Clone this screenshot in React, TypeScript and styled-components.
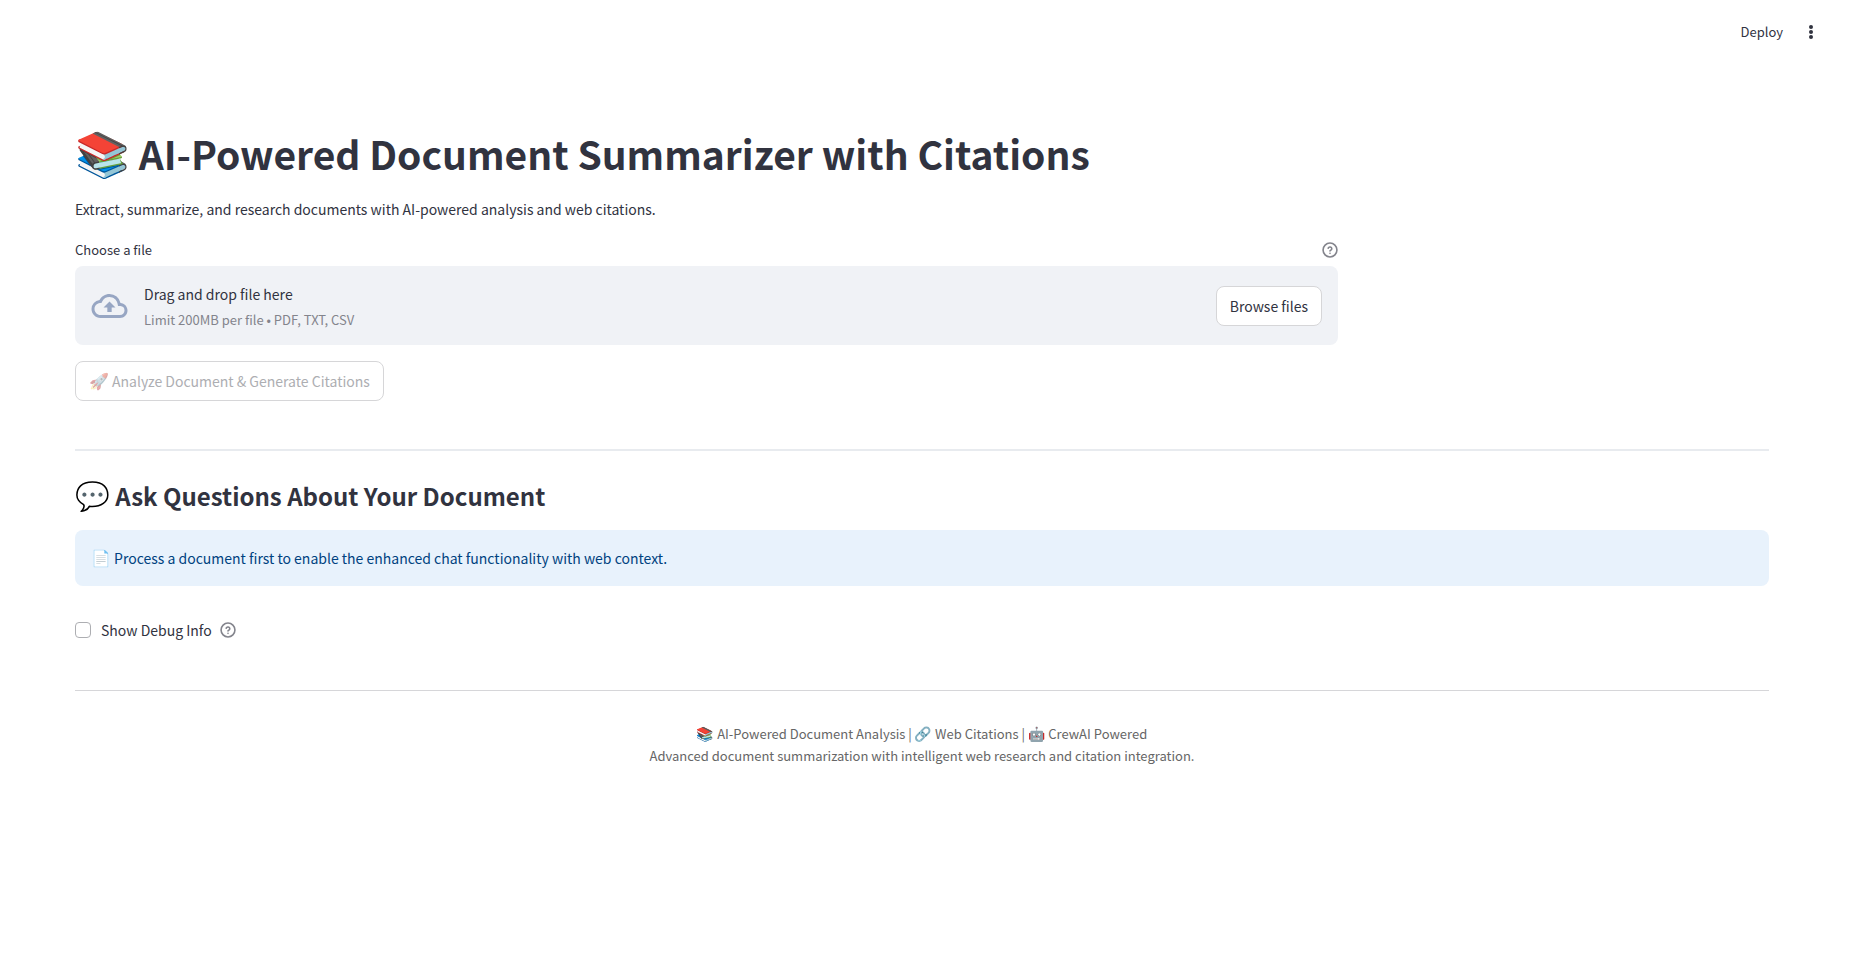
import React from "react";
import styled, { createGlobalStyle } from "styled-components";

const GlobalStyle = createGlobalStyle`
  *, *::before, *::after { box-sizing: border-box; }
  body {
    margin: 0;
    background: #ffffff;
    color: #31333f;
    font-family: "Source Sans Pro", "Noto Sans CJK JP", "Noto Sans", sans-serif;
    font-size: 14px;
    line-height: 24px;
  }
  button, input { font: inherit; color: inherit; }
  h1, h2, p { margin: 0; }
`;

const Header = styled.header`
  display: flex;
  justify-content: flex-end;
  align-items: center;
  gap: 18px;
  height: 64px;
  padding: 0 28px;
`;

const PlainButton = styled.button`
  display: flex;
  align-items: center;
  padding: 0;
  border: 0;
  background: transparent;
  font-size: 13px;
  line-height: 20px;
  cursor: pointer;
`;

const Main = styled.main`
  padding: 55px 80px 80px 75px;
`;

const Emoji = styled.span<{ $size: number }>`
  font-family: "Noto Color Emoji", sans-serif;
  font-size: ${(p) => p.$size}px;
  line-height: 1;
`;

const Title = styled.h1`
  font-size: 39px;
  font-weight: 700;
  line-height: 52px;
  padding: 8px 0 18px;
`;

const Upload = styled.section`
  display: grid;
  grid-template-columns: 3fr 1fr;
  gap: 10px;
  margin-top: 19px;
`;

const LabelRow = styled.div`
  display: flex;
  justify-content: space-between;
  align-items: center;
  margin-bottom: 6px;
  font-size: 13px;
  line-height: 20px;
`;

const Dropzone = styled.div`
  display: flex;
  align-items: center;
  gap: 16px;
  padding: 15px 16px;
  min-height: 79px;
  border-radius: 8px;
  background: #f0f2f6;
`;

const DropText = styled.div`
  flex: 1;
`;

const Limit = styled.div`
  margin-top: 4px;
  font-size: 13px;
  line-height: 20px;
  color: #83848c;
`;

const Button = styled.button`
  height: 40px;
  padding: 0 13px;
  border: 1px solid #d6d6d8;
  border-radius: 8px;
  background: #ffffff;
  cursor: pointer;
  &:disabled {
    color: #adaeb2;
    cursor: not-allowed;
  }
  &:disabled span { opacity: 0.4; }
`;

const Actions = styled.div`
  margin-top: 16px;
`;

const Divider = styled.hr<{ $strong?: boolean }>`
  margin: ${(p) => (p.$strong ? "48px 0 26px" : "48px 0 32px")};
  border: 0;
  height: ${(p) => (p.$strong ? 2 : 1)}px;
  background: ${(p) => (p.$strong ? "#e8ebef" : "#d6d6d9")};
`;

const Subtitle = styled.h2`
  font-size: 24px;
  font-weight: 700;
  line-height: 38px;
`;

const Notice = styled.div`
  margin-top: 15px;
  padding: 16px;
  border-radius: 8px;
  background: #e8f2fc;
  color: #004280;
`;

const DebugRow = styled.div`
  display: flex;
  align-items: center;
  gap: 8px;
  margin-top: 32px;
`;

const CheckLabel = styled.label`
  display: flex;
  align-items: center;
  gap: 10px;
`;

const Checkbox = styled.input`
  appearance: none;
  width: 16px;
  height: 16px;
  margin: 0;
  border: 1px solid #adaeb2;
  border-radius: 4px;
  background: #ffffff;
  &:checked { background: #ff4b4b; }
`;

const Footer = styled.footer`
  text-align: center;
  font-size: 13px;
  line-height: 22px;
  color: #666666;
`;

const Svg = styled.svg`
  display: block;
  flex: none;
`;

const HelpIcon = () => (
  <Svg width="16" height="16" viewBox="0 0 24 24" fill="none" stroke="#83848c" strokeWidth="2.4" strokeLinecap="round" strokeLinejoin="round" role="img" aria-label="Help">
    <circle cx="12" cy="12" r="10.4" />
    <path d="M9.3 9.2a2.8 2.8 0 0 1 5.4 1c0 1.8-2.7 2.6-2.7 3.2" />
    <path d="M12 17h.01" />
  </Svg>
);

const CloudIcon = () => (
  <Svg width="37" height="36" viewBox="0 0 24 24" fill="#97a6c3" aria-hidden="true">
    <path d="M19.35 10.04A7.49 7.49 0 0 0 12 4C9.11 4 6.6 5.64 5.35 8.04A5.994 5.994 0 0 0 0 14c0 3.31 2.69 6 6 6h13c2.76 0 5-2.24 5-5 0-2.64-2.05-4.78-4.65-4.96zM19 18H6c-2.21 0-4-1.79-4-4 0-2.05 1.53-3.76 3.56-3.97l1.07-.11.5-.95A5.469 5.469 0 0 1 12 6c2.62 0 4.88 1.86 5.39 4.43l.3 1.5 1.53.11A2.98 2.98 0 0 1 22 15c0 1.65-1.35 3-3 3zM8 13h2.55v3h2.9v-3H16l-4-4z" />
  </Svg>
);

const DotsIcon = () => (
  <Svg width="20" height="20" viewBox="0 0 20 20" fill="#31333f" aria-hidden="true">
    <circle cx="10" cy="5" r="2" />
    <circle cx="10" cy="10" r="2" />
    <circle cx="10" cy="15" r="2" />
  </Svg>
);

export default function App() {
  return (
    <>
      <GlobalStyle />
      <Header>
        <PlainButton type="button">Deploy</PlainButton>
        <PlainButton type="button" aria-label="Main menu">
          <DotsIcon />
        </PlainButton>
      </Header>
      <Main>
        <Title>
          <Emoji $size={44}>📚</Emoji> AI-Powered Document Summarizer with Citations
        </Title>
        <p>Extract, summarize, and research documents with AI-powered analysis and web citations.</p>
        <Upload>
          <div>
            <LabelRow>
              <span id="file-label">Choose a file</span>
              <HelpIcon />
            </LabelRow>
            <Dropzone role="group" aria-labelledby="file-label">
              <CloudIcon />
              <DropText>
                <div>Drag and drop file here</div>
                <Limit>Limit 200MB per file • PDF, TXT, CSV</Limit>
              </DropText>
              <Button type="button">Browse files</Button>
            </Dropzone>
            <Actions>
              <Button type="button" disabled>
                <Emoji $size={16}>🚀</Emoji> Analyze Document &amp; Generate Citations
              </Button>
            </Actions>
          </div>
        </Upload>
        <Divider $strong />
        <Subtitle>
          <Emoji $size={28}>💬</Emoji> Ask Questions About Your Document
        </Subtitle>
        <Notice role="status">
          <Emoji $size={16}>📄</Emoji> Process a document first to enable the enhanced chat functionality with web context.
        </Notice>
        <DebugRow>
          <CheckLabel>
            <Checkbox type="checkbox" />
            Show Debug Info
          </CheckLabel>
          <HelpIcon />
        </DebugRow>
        <Divider />
        <Footer>
          <p>
            <Emoji $size={14}>📚</Emoji> AI-Powered Document Analysis | <Emoji $size={14}>🔗</Emoji> Web Citations | <Emoji $size={14}>🤖</Emoji> CrewAI Powered
          </p>
          <p>Advanced document summarization with intelligent web research and citation integration.</p>
        </Footer>
      </Main>
    </>
  );
}
